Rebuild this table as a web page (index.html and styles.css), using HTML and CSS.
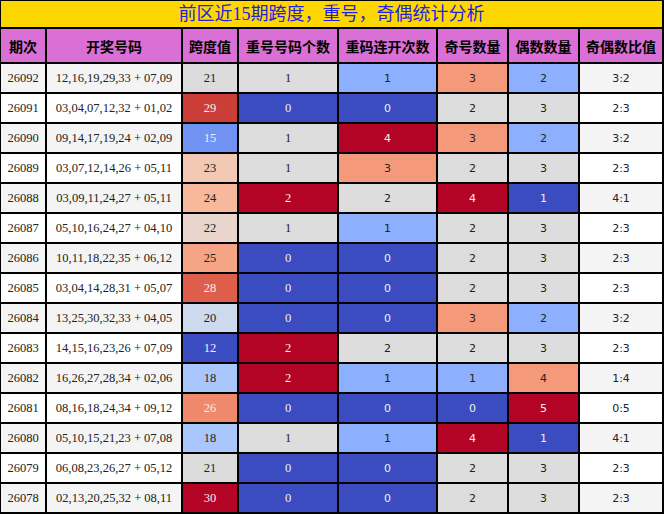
FILE: index.html
```html
<!DOCTYPE html>
<html lang="zh">
<head>
<meta charset="utf-8">
<link rel="stylesheet" href="styles.css">
</head>
<body>
<table class="stats">
  <colgroup>
    <col class="w1"><col class="w2"><col class="w3"><col class="w4"><col class="w5"><col class="w6"><col class="w7"><col class="w8">
  </colgroup>
  <tr class="title-row"><td colspan="8" class="title">前区近<span class="num">15</span>期跨度，重号，奇偶统计分析</td></tr>
  <tr class="head-row">
    <th>期次</th><th>开奖号码</th><th>跨度值</th><th>重号号码个数</th><th>重码连开次数</th><th>奇号数量</th><th>偶数数量</th><th>奇偶数比值</th>
  </tr>
  <tr class="odd"><td class="serif">26092</td><td class="serif">12,16,19,29,33 + 07,09</td><td class="serif k21">21</td><td class="serif g">1</td><td class="sans b1">1</td><td class="sans s">3</td><td class="sans b1">2</td><td class="sans">3:2</td></tr>
  <tr><td class="serif">26091</td><td class="serif">03,04,07,12,32 + 01,02</td><td class="serif k29">29</td><td class="serif b0">0</td><td class="sans b0">0</td><td class="sans g">2</td><td class="sans g">3</td><td class="sans">2:3</td></tr>
  <tr class="odd"><td class="serif">26090</td><td class="serif">09,14,17,19,24 + 02,09</td><td class="serif k15">15</td><td class="serif g">1</td><td class="sans r">4</td><td class="sans s">3</td><td class="sans b1">2</td><td class="sans">3:2</td></tr>
  <tr><td class="serif">26089</td><td class="serif">03,07,12,14,26 + 05,11</td><td class="serif k23">23</td><td class="serif g">1</td><td class="sans s">3</td><td class="sans g">2</td><td class="sans g">3</td><td class="sans">2:3</td></tr>
  <tr class="odd"><td class="serif">26088</td><td class="serif">03,09,11,24,27 + 05,11</td><td class="serif k24">24</td><td class="serif r">2</td><td class="sans g">2</td><td class="sans r">4</td><td class="sans b0">1</td><td class="sans">4:1</td></tr>
  <tr><td class="serif">26087</td><td class="serif">05,10,16,24,27 + 04,10</td><td class="serif k22">22</td><td class="serif g">1</td><td class="sans b1">1</td><td class="sans g">2</td><td class="sans g">3</td><td class="sans">2:3</td></tr>
  <tr class="odd"><td class="serif">26086</td><td class="serif">10,11,18,22,35 + 06,12</td><td class="serif k25">25</td><td class="serif b0">0</td><td class="sans b0">0</td><td class="sans g">2</td><td class="sans g">3</td><td class="sans">2:3</td></tr>
  <tr><td class="serif">26085</td><td class="serif">03,04,14,28,31 + 05,07</td><td class="serif k28">28</td><td class="serif b0">0</td><td class="sans b0">0</td><td class="sans g">2</td><td class="sans g">3</td><td class="sans">2:3</td></tr>
  <tr class="odd"><td class="serif">26084</td><td class="serif">13,25,30,32,33 + 04,05</td><td class="serif k20">20</td><td class="serif b0">0</td><td class="sans b0">0</td><td class="sans s">3</td><td class="sans b1">2</td><td class="sans">3:2</td></tr>
  <tr><td class="serif">26083</td><td class="serif">14,15,16,23,26 + 07,09</td><td class="serif k12">12</td><td class="serif r">2</td><td class="sans g">2</td><td class="sans g">2</td><td class="sans g">3</td><td class="sans">2:3</td></tr>
  <tr class="odd"><td class="serif">26082</td><td class="serif">16,26,27,28,34 + 02,06</td><td class="serif k18">18</td><td class="serif r">2</td><td class="sans b1">1</td><td class="sans b1">1</td><td class="sans s">4</td><td class="sans">1:4</td></tr>
  <tr><td class="serif">26081</td><td class="serif">08,16,18,24,34 + 09,12</td><td class="serif k26">26</td><td class="serif b0">0</td><td class="sans b0">0</td><td class="sans b0">0</td><td class="sans r">5</td><td class="sans">0:5</td></tr>
  <tr class="odd"><td class="serif">26080</td><td class="serif">05,10,15,21,23 + 07,08</td><td class="serif k18">18</td><td class="serif g">1</td><td class="sans b1">1</td><td class="sans r">4</td><td class="sans b0">1</td><td class="sans">4:1</td></tr>
  <tr><td class="serif">26079</td><td class="serif">06,08,23,26,27 + 05,12</td><td class="serif k21">21</td><td class="serif b0">0</td><td class="sans b0">0</td><td class="sans g">2</td><td class="sans g">3</td><td class="sans">2:3</td></tr>
  <tr class="odd"><td class="serif">26078</td><td class="serif">02,13,20,25,32 + 08,11</td><td class="serif k30">30</td><td class="serif b0">0</td><td class="sans b0">0</td><td class="sans g">2</td><td class="sans g">3</td><td class="sans">2:3</td></tr>
</table>
</body>
</html>
```

FILE: styles.css
```css
html, body {
  margin: 0;
  padding: 0;
  background: #ffffff;
}

.stats {
  table-layout: fixed;
  border-collapse: separate;
  border-spacing: 0;
  width: 664px;
  border-right: 1px solid #000;
  border-bottom: 1px solid #000;
}

.w1 { width: 46px; }
.w2 { width: 136px; }
.w3 { width: 56px; }
.w4 { width: 100px; }
.w5 { width: 99px; }
.w6 { width: 71px; }
.w7 { width: 71px; }
.w8 { width: 84px; }

.stats td, .stats th {
  box-sizing: border-box;
  border: 1px solid #000;
  padding: 0;
  text-align: center;
  vertical-align: middle;
  height: 30px;
  background: #ffffff;
  color: #222;
  white-space: nowrap;
  overflow: hidden;
}

.stats .title {
  height: 28px;
  background: #ffd700;
  color: #2222e0;
  font-family: "Noto Sans CJK SC", sans-serif;
  font-size: 18px;
  line-height: 22px;
  padding-bottom: 2px;
}

.title .num {
  font-family: "Liberation Serif", serif;
}

.stats th {
  height: 35px;
  background: #da70d6;
  color: #000;
  font-family: "Noto Sans CJK SC", sans-serif;
  font-weight: bold;
  font-size: 14px;
}

.odd td { background: #f4f4f4; }

.stats td.serif {
  font-family: "Liberation Serif", serif;
  font-size: 12.5px;
}

.stats td.sans {
  font-family: "DejaVu Sans", sans-serif;
  font-size: 11px;
}

/* heat colours */
.stats td.b0 { background: #3b4cc0; color: #f0f0f0; }
.stats td.b1 { background: #8db0fe; }
.stats td.g  { background: #dddddd; }
.stats td.s  { background: #f49a7b; }
.stats td.r  { background: #b40426; color: #f0f0f0; }

.stats td.k12 { background: #3b4cc0; color: #f0f0f0; }
.stats td.k15 { background: #6f92f3; color: #f0f0f0; }
.stats td.k18 { background: #aac7fd; }
.stats td.k20 { background: #cdd9ec; }
.stats td.k21 { background: #dddcdc; }
.stats td.k22 { background: #e9d5cb; }
.stats td.k23 { background: #f2c9b4; }
.stats td.k24 { background: #f7b89c; }
.stats td.k25 { background: #f5a486; }
.stats td.k26 { background: #ef896c; color: #f0f0f0; }
.stats td.k28 { background: #dc5e4b; color: #f0f0f0; }
.stats td.k29 { background: #cb3e38; color: #f0f0f0; }
.stats td.k30 { background: #b40426; color: #f0f0f0; }
```
